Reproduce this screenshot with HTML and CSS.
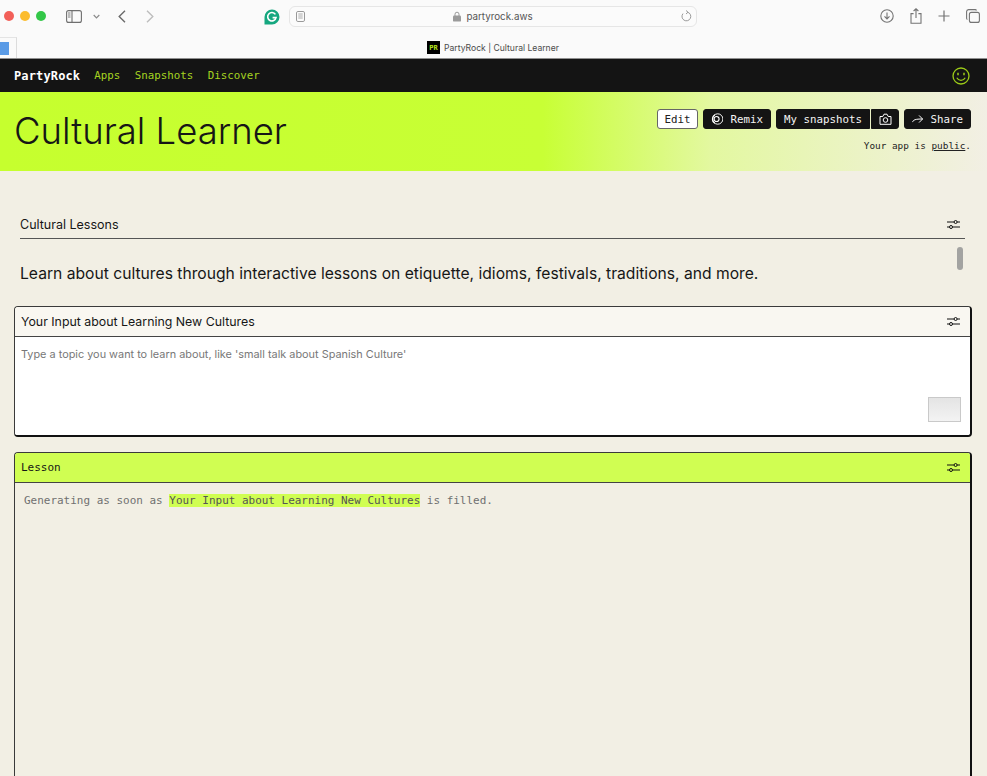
FILE: index.html
```html
<!DOCTYPE html>
<html lang="en">
<head>
<meta charset="utf-8">
<title>PartyRock | Cultural Learner</title>
<link rel="stylesheet" href="styles.css">
</head>
<body>
<div class="chrome">
  <div class="toolbar">
    <div class="lights"><i class="light red"></i><i class="light yellow"></i><i class="light green"></i></div>
    <svg class="sidebar-ico" width="16" height="13" viewBox="0 0 16 13" fill="none" stroke="#6f6f6f" stroke-width="1.1"><rect x=".6" y=".6" width="14.8" height="11.8" rx="2"/><path d="M6 .6v11.8"/><path d="M2 3h2.5M2 5h2.5M2 7h2.5" stroke-width=".9"/></svg>
    <svg class="chev" width="7" height="5" viewBox="0 0 7 5" fill="none" stroke="#8a8a8a" stroke-width="1.2"><path d="M.7 1l2.8 2.8L6.3 1"/></svg>
    <svg class="back" width="8" height="13" viewBox="0 0 8 13" fill="none" stroke="#6a6a6a" stroke-width="1.4"><path d="M7 .8L1.2 6.5 7 12.2"/></svg>
    <svg class="forward" width="8" height="13" viewBox="0 0 8 13" fill="none" stroke="#bdbdbd" stroke-width="1.4"><path d="M1 .8l5.8 5.7L1 12.2"/></svg>
    <svg class="grammarly" width="16" height="16" viewBox="0 0 16 16"><path d="M8 .5a7.500 7.500 0 0 1 0 15H.5V8A7.500 7.500 0 0 1 8 .5z" fill="#15a77f"/><path d="M11.400 5.400A4.200 4.200 0 1 0 12 8.600H8.600" fill="none" stroke="#fff" stroke-width="1.600"/></svg>
    <div class="address">
      <svg width="9" height="11" viewBox="0 0 9 11" fill="none" stroke="#999" stroke-width="1"><rect x=".5" y=".5" width="8" height="10" rx="1.400"/><path d="M2.300 3h4.400M2.300 5h4.400M2.300 7h4.400" stroke-width=".8"/></svg>
      <div class="url"><svg width="8" height="11" viewBox="0 0 8 11"><path d="M2 5V3.200a2 2 0 0 1 4 0V5" fill="none" stroke="#9b9b9b" stroke-width="1"/><rect y="4.600" width="8" height="6" rx="1.200" fill="#9b9b9b"/></svg><span>partyrock.aws</span></div>
      <svg width="11" height="12" viewBox="0 0 11 12" fill="none" stroke="#9a9a9a" stroke-width="1"><path d="M6.600 2.200A4.400 4.400 0 1 1 2 3.600"/><path d="M5 .5l2 1.700L5 4"/></svg>
    </div>
    <div class="tools">
      <svg width="14" height="14" viewBox="0 0 14 14" fill="none" stroke="#747474" stroke-width="1.100"><circle cx="7" cy="7" r="6.200"/><path d="M7 3.600v6.200M4.500 7.400L7 9.900l2.500-2.500"/></svg>
      <svg width="12" height="16" viewBox="0 0 12 16" fill="none" stroke="#747474" stroke-width="1.100"><path d="M3.600 5.600H1v9.600h10V5.600H8.400M6 10V.8M3.600 3L6 .8 8.400 3"/></svg>
      <svg width="12" height="12" viewBox="0 0 12 12" fill="none" stroke="#747474" stroke-width="1.200"><path d="M6 .5v11M.5 6h11"/></svg>
      <svg width="14" height="14" viewBox="0 0 14 14" fill="none" stroke="#747474" stroke-width="1.100"><rect x="3.400" y="3.400" width="10" height="10" rx="2"/><path d="M10.500 1.400A1.400 1.400 0 0 0 9.300.6H2.500A2 2 0 0 0 .6 2.500v6.800c0 .6.3 1 .8 1.200"/></svg>
    </div>
  </div>
  <div class="tabbar">
    <div class="pinned"><span class="pinned-thumb"></span></div>
    <div class="tabtitle"><span class="favicon">PR</span><span>PartyRock | Cultural Learner</span></div>
  </div>
</div>

<nav class="nav">
  <span class="brand">PartyRock</span>
  <a class="navlink">Apps</a>
  <a class="navlink">Snapshots</a>
  <a class="navlink">Discover</a>
  <svg class="smile" width="18" height="18" viewBox="0 0 18 18" fill="none" stroke="#9ccb18" stroke-width="1.300"><circle cx="9" cy="9" r="8"/><path d="M6 5.800v2.400M12 5.800v2.400" stroke-width="1.500"/><path d="M4.800 10.800c1 1.800 2.500 2.600 4.200 2.600s3.200-.8 4.200-2.600"/></svg>
</nav>

<header class="hero">
  <h1 class="title">Cultural Learner</h1>
  <div class="hero-side">
    <div class="actions">
      <button class="btn btn-light btn-edit">Edit</button>
      <button class="btn btn-dark btn-remix"><svg width="13" height="12" viewBox="0 0 13 12" fill="none" stroke="#fff" stroke-width="1"><circle cx="7" cy="6" r="5.400"/><circle cx="5.800" cy="6" r="2.600" stroke-width="1.200"/><path d="M4 1.500A5.300 5.300 0 0 0 4 10.500" stroke-width="1.300"/></svg>Remix</button>
      <div class="btn-group">
        <button class="btn btn-dark btn-left">My snapshots</button>
        <button class="btn btn-dark btn-right"><svg width="13" height="12" viewBox="0 0 13 12" fill="none" stroke="#fff" stroke-width="1"><path d="M1 3.500h2.800L5 1.200h3l1.200 2.300H12v7.800H1z" stroke-linejoin="round"/><circle cx="6.500" cy="7" r="2.300"/></svg></button>
      </div>
      <button class="btn btn-dark btn-share"><svg width="13" height="10" viewBox="0 0 13 10" fill="none" stroke="#fff" stroke-width="1.100"><path d="M.6 8.500C1.500 6 3.500 5 12 5M8 1l4 4-4 4"/></svg>Share</button>
    </div>
    <p class="visibility">Your app is <u>public</u>.</p>
  </div>
</header>

<main class="content">
  <section class="intro">
    <div class="intro-head">
      <h2 class="intro-title">Cultural Lessons</h2>
      <svg class="tune" width="13" height="11" viewBox="0 0 13 11" fill="none" stroke="#111" stroke-width="1"><path d="M0 3h7.200M10 3h3M0 8h2.600M5.400 8H13"/><circle cx="8.600" cy="3" r="1.500"/><circle cx="4" cy="8" r="1.500"/></svg>
    </div>
    <div class="intro-body">
      <p class="intro-text">Learn about cultures through interactive lessons on etiquette, idioms, festivals, traditions, and more.</p>
      <span class="scrollbar"></span>
    </div>
  </section>

  <section class="card">
    <div class="card-head head-input">
      <h3 class="card-title">Your Input about Learning New Cultures</h3>
      <svg class="tune" width="13" height="11" viewBox="0 0 13 11" fill="none" stroke="#111" stroke-width="1"><path d="M0 3h7.200M10 3h3M0 8h2.600M5.400 8H13"/><circle cx="8.600" cy="3" r="1.500"/><circle cx="4" cy="8" r="1.500"/></svg>
    </div>
    <div class="input-body">
      <p class="placeholder">Type a topic you want to learn about, like 'small talk about Spanish Culture'</p>
      <span class="submit"></span>
    </div>
  </section>

  <section class="card card-lesson">
    <div class="card-head head-lesson">
      <h3 class="card-title mono-title">Lesson</h3>
      <svg class="tune" width="13" height="11" viewBox="0 0 13 11" fill="none" stroke="#111" stroke-width="1"><path d="M0 3h7.200M10 3h3M0 8h2.600M5.400 8H13"/><circle cx="8.600" cy="3" r="1.500"/><circle cx="4" cy="8" r="1.500"/></svg>
    </div>
    <p class="lesson-body">Generating as soon as <mark class="hl">Your Input about Learning New Cultures</mark> is filled.</p>
  </section>
</main>
</body>
</html>
```
FILE: styles.css
```css
* { box-sizing: border-box; }
html, body { margin: 0; height: 776px; overflow: hidden; }
body { background: #f2efe4; font-family: "Inter", "Liberation Sans", sans-serif; color: #161616; }
h1, h2, h3, p { margin: 0; }

.chrome { height: 59px; background: #fafafa; border-bottom: 1px solid #8f8f8f; }
.toolbar { height: 37px; display: flex; align-items: center; padding-left: 4px; }
.lights { display: flex; gap: 6px; width: 62px; margin-top: -5px; }
.light { width: 10px; height: 10px; border-radius: 50%; }
.red { background: #f25f58; }
.yellow { background: #fbbc2e; }
.green { background: #33c748; }
.sidebar-ico { margin-top: -5px; }
.chev { margin: -5px 0 0 11px; }
.back { margin: -5px 0 0 18px; }
.forward { margin: -5px 0 0 20px; }
.grammarly { margin: -3px 0 0 110px; }
.address { width: 408px; height: 21px; margin: -5px 0 0 9px; border: 1px solid #e6e6e6; border-radius: 6px; display: flex; align-items: center; justify-content: space-between; padding: 0 4px 0 6px; background: #fbfbfb; }
.url { display: flex; align-items: center; gap: 5px; font-size: 9.800px; color: #555; }
.tools { display: flex; align-items: center; gap: 16px; margin: -5px 0 0 183px; }
.tabbar { height: 21px; position: relative; display: flex; justify-content: center; align-items: center; }
.pinned { position: absolute; left: 0; top: 0; width: 17px; height: 21px; border-right: 1px solid #dcdcdc; border-top: 1px solid #e4e4e4; display: flex; align-items: center; }
.pinned-thumb { width: 9px; height: 13px; background: #5a9be6; }
.tabtitle { display: flex; align-items: center; gap: 4px; font-size: 8.600px; color: #4a4a4a; margin-left: -1px; }
.favicon { width: 13px; height: 13px; background: #000; color: #b7e51e; font: bold 7px "DejaVu Sans Mono", monospace; display: flex; align-items: center; justify-content: center; }

.nav { height: 33px; background: #141414; display: flex; align-items: center; padding: 0 17px 0 14px; font-family: "DejaVu Sans Mono", monospace; font-size: 10.800px; }
.brand { color: #fff; font-weight: 700; font-size: 12px; margin-right: 14px; letter-spacing: .13px; }
.navlink { color: #a6d321; margin-right: 14.500px; }
.smile { margin-left: auto; }

.hero { height: 79px; background: linear-gradient(90deg, #c6ff2e 0%, #c8ff35 55%, #e3f8a0 72%, #f2efe4 100%); display: flex; justify-content: space-between; padding: 17px 16px 0 14px; }
.title { font-size: 36.500px; font-weight: 300; line-height: 44px; }
.hero-side { display: flex; flex-direction: column; align-items: flex-end; }
.actions { display: flex; gap: 5px; }
.btn { height: 20px; border-radius: 3px; border: 1px solid #141414; font: 10.800px "DejaVu Sans Mono", monospace; padding: 0 7px; display: flex; align-items: center; gap: 7px; }
.btn-edit { width: 41px; justify-content: center; padding: 0; }
.btn-remix { width: 68px; }
.btn-share { width: 67px; }
.btn-light { background: #fff; color: #222; border-color: #666; }
.btn-dark { background: #141414; color: #f4f4f4; }
.btn-group { display: flex; gap: 1px; }
.btn-left { width: 94px; border-radius: 3px 0 0 3px; justify-content: center; padding: 0; }
.btn-right { width: 28px; border-radius: 0 3px 3px 0; justify-content: center; padding: 0; }
.visibility { font: 9.400px "DejaVu Sans Mono", monospace; margin-top: 11px; color: #222; }

.content { padding: 39px 15px 0 14px; }
.intro { padding: 0 0 0 6px; }
.intro-head { height: 29px; margin-right: 7px; border-bottom: 1px solid #555; display: flex; align-items: center; justify-content: space-between; padding-right: 5px; }
.intro-title { font-size: 12.500px; font-weight: 400; }
.intro-body { height: 67px; position: relative; padding-top: 25px; }
.intro-text { font-size: 15.660px; font-weight: 400; }
.scrollbar { position: absolute; top: 8px; right: 9px; width: 6px; height: 23px; border-radius: 3px; background: #a3a3a1; }

.card { border: 1px solid #3a3a3a; border-right: 2px solid #111; border-bottom: 2px solid #111; border-radius: 4px; overflow: hidden; }
.card-head { height: 30px; display: flex; align-items: center; justify-content: space-between; padding: 0 10px 0 6px; border-bottom: 1px solid #444; }
.head-input { background: #f9f7f1; }
.head-lesson { background: #d0fe52; }
.card-title { font-size: 12.370px; font-weight: 400; }
.mono-title { font: 500 11px "DejaVu Sans Mono", monospace; }
.input-body { height: 98px; background: #fff; position: relative; padding: 10px 6px; }
.placeholder { font-size: 10.880px; color: #777; }
.submit { position: absolute; right: 9px; bottom: 13px; width: 33px; height: 25px; background: linear-gradient(#e4e4e4, #f3f3f3); border: 1px solid #c9c9c9; }
.card-lesson { margin-top: 15px; height: 340px; border-bottom: none; border-radius: 4px 4px 0 0; }
.lesson-body { font: 10.970px "DejaVu Sans Mono", monospace; color: #707070; padding: 11px 9px; }
.hl { background: #d0fe52; color: #555; }
```
